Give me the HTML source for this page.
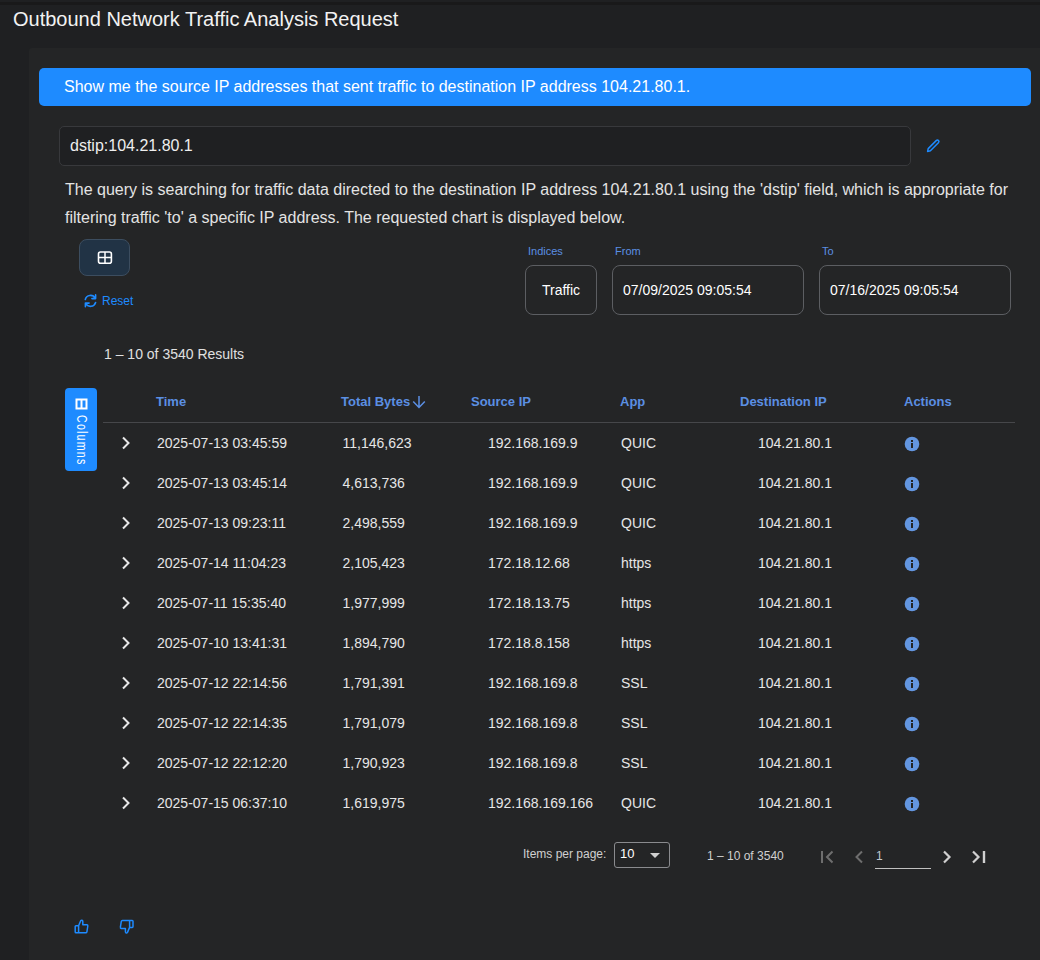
<!DOCTYPE html>
<html><head><meta charset="utf-8">
<style>
*{box-sizing:border-box;margin:0;padding:0}
html,body{width:1040px;height:960px;overflow:hidden;background:#1f2022;font-family:"Liberation Sans",sans-serif;color:#e6e6e6}
.a{position:absolute;white-space:nowrap}
#top{position:absolute;left:0;top:2px;width:1040px;height:3px;background:#19191a}
#title{left:13px;top:5px;font-size:20px;line-height:28px;color:#f2f2f2}
#panel{position:absolute;left:29px;top:48px;width:1020px;height:920px;background:#242526;border-radius:3px}
#banner{position:absolute;left:39px;top:68px;width:992px;height:38px;background:#1e8bff;border-radius:5px}
#banner span{left:25px;top:9px;font-size:16px;line-height:20px;color:#fff}
#qbox{position:absolute;left:59px;top:126px;width:852px;height:40px;background:#1f2022;border:1px solid #38393c;border-radius:5px}
#qbox span{left:10px;top:9px;font-size:16px;line-height:20px;color:#eee}
.para{left:65px;font-size:16px;line-height:28px;color:#e3e3e3}
#gbtn{position:absolute;left:79px;top:239px;width:51px;height:37px;background:#213345;border:1px solid #3c4d5f;border-radius:8px}
.lbl{font-size:11px;line-height:14px;color:#5b8fe3}
.box{position:absolute;top:265px;height:50px;border:1px solid #5c5e62;border-radius:8px}
.box span{font-size:14px;line-height:20px;top:14px;color:#fff}
#results{left:104px;top:344px;font-size:14px;line-height:20px;color:#e0e0e0}
#coltab{position:absolute;left:65px;top:388px;width:32px;height:83px;background:#1e8bff;border-radius:4px}
.th{top:394px;font-size:13px;font-weight:700;line-height:16px;color:#5b8fe3}
#hline{position:absolute;left:103px;top:422px;width:912px;height:1px;background:#46474a}
.td{font-size:14px;line-height:20px;color:#e6e6e6}
.pg{font-size:12px;line-height:16px;color:#d0d0d0}
.row{position:absolute;left:0;width:1040px;height:20px}
.row .td{top:0}
.chev{position:absolute;left:121px;top:3px}
.info{position:absolute;left:904px;top:3px}
</style></head><body>
<div id="top"></div>
<div class="a" id="title">Outbound Network Traffic Analysis Request</div>
<div id="panel"></div>
<div id="banner"><span class="a">Show me the source IP addresses that sent traffic to destination IP address 104.21.80.1.</span></div>
<div id="qbox"><span class="a">dstip:104.21.80.1</span></div>
<svg class="a" style="left:926px;top:138px" width="15" height="15" viewBox="0 0 15 15"><path d="M2.2 10.6 L10.2 2.6 Q11.4 1.5 12.5 2.6 Q13.5 3.7 12.4 4.8 L4.4 12.8 L1.6 13.4 Z" fill="none" stroke="#1e8bff" stroke-width="1.5" stroke-linejoin="round"/></svg>
<div class="a para" style="top:176px">The query is searching for traffic data directed to the destination IP address 104.21.80.1 using the 'dstip' field, which is appropriate for</div>
<div class="a para" style="top:204px">filtering traffic 'to' a specific IP address. The requested chart is displayed below.</div>
<div id="gbtn"></div>
<svg class="a" style="left:94px;top:248px" width="22" height="20" viewBox="0 0 22 20"><rect x="4.5" y="4" width="12.9" height="11.3" rx="2" fill="none" stroke="#fff" stroke-width="1.6"/><path d="M11 4V15.3M4.5 9.6H17.4" stroke="#fff" stroke-width="1.5"/></svg>
<svg class="a" style="left:82px;top:292px" width="18" height="18" viewBox="0 0 18 18"><path d="M3.3 7.5A5.3 5.3 0 0 1 13.2 6.3M13.6 2.9V6.6H9.9" fill="none" stroke="#1e8bff" stroke-width="1.6" stroke-linejoin="round" stroke-linecap="round"/><path d="M13.6 10.5A5.3 5.3 0 0 1 3.8 11.5M3.4 14.8V11.1H7.1" fill="none" stroke="#1e8bff" stroke-width="1.6" stroke-linejoin="round" stroke-linecap="round"/></svg>
<div class="a" style="left:102px;top:293px;font-size:12px;line-height:16px;color:#1e8bff">Reset</div>
<div class="a lbl" style="left:528px;top:244px">Indices</div>
<div class="a lbl" style="left:615px;top:244px">From</div>
<div class="a lbl" style="left:822px;top:244px">To</div>
<div class="box" style="left:525px;width:72px"><span class="a" style="left:16px">Traffic</span></div>
<div class="box" style="left:612px;width:192px"><span class="a" style="left:10px">07/09/2025 09:05:54</span></div>
<div class="box" style="left:819px;width:192px"><span class="a" style="left:10px">07/16/2025 09:05:54</span></div>
<div class="a" id="results">1 – 10 of 3540 Results</div>
<div id="coltab"></div>
<div class="a th" style="left:156px">Time</div>
<div class="a th" style="left:341px">Total Bytes</div>
<div class="a th" style="left:471px">Source IP</div>
<div class="a th" style="left:620px">App</div>
<div class="a th" style="left:740px">Destination IP</div>
<div class="a th" style="left:904px">Actions</div>
<div id="hline"></div>
<svg class="a" style="left:412px;top:395px" width="14" height="14" viewBox="0 0 14 14"><path d="M7 1V12.5M1.2 6.5L7 12.5L12.8 6.5" fill="none" stroke="#5b8fe3" stroke-width="1.5"/></svg>
<div class="a" style="left:65px;top:388px;width:32px;height:83px">
<svg class="a" style="left:10px;top:10px" width="13" height="13" viewBox="0 0 13 13"><path d="M0.5 0.5H12.5V11.5H0.5Z M2.5 2.5V9.5H5.5V2.5Z M7.5 2.5V9.5H10.5V2.5Z" fill="#fff" fill-rule="evenodd"/></svg>
<div class="a" style="left:9px;top:27px;font-size:14px;line-height:16px;letter-spacing:1.6px;color:#fff;transform-origin:0 0;transform:translate(16px,0) rotate(90deg) scaleX(0.76)">Columns</div>
</div>
<div class="a pg" style="left:523px;top:846px">Items per page:</div>
<div class="a" style="left:614px;top:842px;width:56px;height:26px;border:1px solid #8a8b8e;border-radius:3px"></div>
<div class="a" style="left:620px;top:846px;font-size:13px;line-height:16px;color:#fff">10</div>
<svg class="a" style="left:650px;top:853px" width="10" height="6" viewBox="0 0 10 6"><path d="M0 0H10L5 5Z" fill="#d0d0d0"/></svg>
<div class="a pg" style="left:707px;top:848px">1 – 10 of 3540</div>
<svg class="a" style="left:819px;top:849px" width="16" height="16" viewBox="0 0 16 16"><path d="M3 2V14" stroke="#6e6e6e" stroke-width="2"/><path d="M13.5 2.5L8 8L13.5 13.5" fill="none" stroke="#6e6e6e" stroke-width="2"/></svg>
<svg class="a" style="left:852px;top:849px" width="14" height="16" viewBox="0 0 14 16"><path d="M10 2.5L4.5 8L10 13.5" fill="none" stroke="#6e6e6e" stroke-width="2"/></svg>
<div class="a pg" style="left:876px;top:848px;color:#c0c8d0">1</div>
<div class="a" style="left:875px;top:868px;width:56px;height:1px;background:#c0c0c0"></div>
<svg class="a" style="left:940px;top:849px" width="14" height="16" viewBox="0 0 14 16"><path d="M4 2.5L9.5 8L4 13.5" fill="none" stroke="#d0d0d0" stroke-width="2.2"/></svg>
<svg class="a" style="left:970px;top:849px" width="18" height="16" viewBox="0 0 18 16"><path d="M3 2.5L8.5 8L3 13.5" fill="none" stroke="#d0d0d0" stroke-width="2.2"/><path d="M14 2V14" stroke="#d0d0d0" stroke-width="2.4"/></svg>
<svg class="a" style="left:70px;top:915px" width="24" height="23" viewBox="0 0 24 23"><path d="M5.2 11.6Q5.2 10.8 6 10.8H8.6V17.8H6Q5.2 17.8 5.2 17Z M8.6 10.8L10.7 5.8Q11.4 4.8 12.3 5.4Q12.8 5.9 12.8 6.8V9.7H17Q18 9.9 17.8 11L16.9 16.8Q16.7 17.8 15.8 17.8H8.6" fill="none" stroke="#1e8bff" stroke-width="1.5" stroke-linejoin="round"/></svg>
<svg class="a" style="left:114px;top:915px" width="24" height="23" viewBox="0 0 24 23"><path transform="rotate(180 12.1 11.6)" d="M5.2 11.6Q5.2 10.8 6 10.8H8.6V17.8H6Q5.2 17.8 5.2 17Z M8.6 10.8L10.7 5.8Q11.4 4.8 12.3 5.4Q12.8 5.9 12.8 6.8V9.7H17Q18 9.9 17.8 11L16.9 16.8Q16.7 17.8 15.8 17.8H8.6" fill="none" stroke="#1e8bff" stroke-width="1.5" stroke-linejoin="round"/></svg>
<div id="rows">
<div class="row" style="top:433px"><svg class="chev" width="10" height="14" viewBox="0 0 10 14"><path d="M2 1.5L7.5 7L2 12.5" fill="none" stroke="#e8e8e8" stroke-width="2"/></svg><span class="a td" style="left:157px">2025-07-13 03:45:59</span><span class="a td" style="left:342.5px">11,146,623</span><span class="a td" style="left:488px">192.168.169.9</span><span class="a td" style="left:621px">QUIC</span><span class="a td" style="left:758px">104.21.80.1</span><svg class="info" width="16" height="16" viewBox="0 0 16 16"><circle cx="8" cy="8" r="7.3" fill="#6396e0"/><rect x="7" y="4" width="2" height="2" fill="#242526"/><rect x="7" y="7" width="2" height="5" fill="#242526"/></svg></div>
<div class="row" style="top:473px"><svg class="chev" width="10" height="14" viewBox="0 0 10 14"><path d="M2 1.5L7.5 7L2 12.5" fill="none" stroke="#e8e8e8" stroke-width="2"/></svg><span class="a td" style="left:157px">2025-07-13 03:45:14</span><span class="a td" style="left:342.5px">4,613,736</span><span class="a td" style="left:488px">192.168.169.9</span><span class="a td" style="left:621px">QUIC</span><span class="a td" style="left:758px">104.21.80.1</span><svg class="info" width="16" height="16" viewBox="0 0 16 16"><circle cx="8" cy="8" r="7.3" fill="#6396e0"/><rect x="7" y="4" width="2" height="2" fill="#242526"/><rect x="7" y="7" width="2" height="5" fill="#242526"/></svg></div>
<div class="row" style="top:513px"><svg class="chev" width="10" height="14" viewBox="0 0 10 14"><path d="M2 1.5L7.5 7L2 12.5" fill="none" stroke="#e8e8e8" stroke-width="2"/></svg><span class="a td" style="left:157px">2025-07-13 09:23:11</span><span class="a td" style="left:342.5px">2,498,559</span><span class="a td" style="left:488px">192.168.169.9</span><span class="a td" style="left:621px">QUIC</span><span class="a td" style="left:758px">104.21.80.1</span><svg class="info" width="16" height="16" viewBox="0 0 16 16"><circle cx="8" cy="8" r="7.3" fill="#6396e0"/><rect x="7" y="4" width="2" height="2" fill="#242526"/><rect x="7" y="7" width="2" height="5" fill="#242526"/></svg></div>
<div class="row" style="top:553px"><svg class="chev" width="10" height="14" viewBox="0 0 10 14"><path d="M2 1.5L7.5 7L2 12.5" fill="none" stroke="#e8e8e8" stroke-width="2"/></svg><span class="a td" style="left:157px">2025-07-14 11:04:23</span><span class="a td" style="left:342.5px">2,105,423</span><span class="a td" style="left:488px">172.18.12.68</span><span class="a td" style="left:621px">https</span><span class="a td" style="left:758px">104.21.80.1</span><svg class="info" width="16" height="16" viewBox="0 0 16 16"><circle cx="8" cy="8" r="7.3" fill="#6396e0"/><rect x="7" y="4" width="2" height="2" fill="#242526"/><rect x="7" y="7" width="2" height="5" fill="#242526"/></svg></div>
<div class="row" style="top:593px"><svg class="chev" width="10" height="14" viewBox="0 0 10 14"><path d="M2 1.5L7.5 7L2 12.5" fill="none" stroke="#e8e8e8" stroke-width="2"/></svg><span class="a td" style="left:157px">2025-07-11 15:35:40</span><span class="a td" style="left:342.5px">1,977,999</span><span class="a td" style="left:488px">172.18.13.75</span><span class="a td" style="left:621px">https</span><span class="a td" style="left:758px">104.21.80.1</span><svg class="info" width="16" height="16" viewBox="0 0 16 16"><circle cx="8" cy="8" r="7.3" fill="#6396e0"/><rect x="7" y="4" width="2" height="2" fill="#242526"/><rect x="7" y="7" width="2" height="5" fill="#242526"/></svg></div>
<div class="row" style="top:633px"><svg class="chev" width="10" height="14" viewBox="0 0 10 14"><path d="M2 1.5L7.5 7L2 12.5" fill="none" stroke="#e8e8e8" stroke-width="2"/></svg><span class="a td" style="left:157px">2025-07-10 13:41:31</span><span class="a td" style="left:342.5px">1,894,790</span><span class="a td" style="left:488px">172.18.8.158</span><span class="a td" style="left:621px">https</span><span class="a td" style="left:758px">104.21.80.1</span><svg class="info" width="16" height="16" viewBox="0 0 16 16"><circle cx="8" cy="8" r="7.3" fill="#6396e0"/><rect x="7" y="4" width="2" height="2" fill="#242526"/><rect x="7" y="7" width="2" height="5" fill="#242526"/></svg></div>
<div class="row" style="top:673px"><svg class="chev" width="10" height="14" viewBox="0 0 10 14"><path d="M2 1.5L7.5 7L2 12.5" fill="none" stroke="#e8e8e8" stroke-width="2"/></svg><span class="a td" style="left:157px">2025-07-12 22:14:56</span><span class="a td" style="left:342.5px">1,791,391</span><span class="a td" style="left:488px">192.168.169.8</span><span class="a td" style="left:621px">SSL</span><span class="a td" style="left:758px">104.21.80.1</span><svg class="info" width="16" height="16" viewBox="0 0 16 16"><circle cx="8" cy="8" r="7.3" fill="#6396e0"/><rect x="7" y="4" width="2" height="2" fill="#242526"/><rect x="7" y="7" width="2" height="5" fill="#242526"/></svg></div>
<div class="row" style="top:713px"><svg class="chev" width="10" height="14" viewBox="0 0 10 14"><path d="M2 1.5L7.5 7L2 12.5" fill="none" stroke="#e8e8e8" stroke-width="2"/></svg><span class="a td" style="left:157px">2025-07-12 22:14:35</span><span class="a td" style="left:342.5px">1,791,079</span><span class="a td" style="left:488px">192.168.169.8</span><span class="a td" style="left:621px">SSL</span><span class="a td" style="left:758px">104.21.80.1</span><svg class="info" width="16" height="16" viewBox="0 0 16 16"><circle cx="8" cy="8" r="7.3" fill="#6396e0"/><rect x="7" y="4" width="2" height="2" fill="#242526"/><rect x="7" y="7" width="2" height="5" fill="#242526"/></svg></div>
<div class="row" style="top:753px"><svg class="chev" width="10" height="14" viewBox="0 0 10 14"><path d="M2 1.5L7.5 7L2 12.5" fill="none" stroke="#e8e8e8" stroke-width="2"/></svg><span class="a td" style="left:157px">2025-07-12 22:12:20</span><span class="a td" style="left:342.5px">1,790,923</span><span class="a td" style="left:488px">192.168.169.8</span><span class="a td" style="left:621px">SSL</span><span class="a td" style="left:758px">104.21.80.1</span><svg class="info" width="16" height="16" viewBox="0 0 16 16"><circle cx="8" cy="8" r="7.3" fill="#6396e0"/><rect x="7" y="4" width="2" height="2" fill="#242526"/><rect x="7" y="7" width="2" height="5" fill="#242526"/></svg></div>
<div class="row" style="top:793px"><svg class="chev" width="10" height="14" viewBox="0 0 10 14"><path d="M2 1.5L7.5 7L2 12.5" fill="none" stroke="#e8e8e8" stroke-width="2"/></svg><span class="a td" style="left:157px">2025-07-15 06:37:10</span><span class="a td" style="left:342.5px">1,619,975</span><span class="a td" style="left:488px">192.168.169.166</span><span class="a td" style="left:621px">QUIC</span><span class="a td" style="left:758px">104.21.80.1</span><svg class="info" width="16" height="16" viewBox="0 0 16 16"><circle cx="8" cy="8" r="7.3" fill="#6396e0"/><rect x="7" y="4" width="2" height="2" fill="#242526"/><rect x="7" y="7" width="2" height="5" fill="#242526"/></svg></div>
</div>
</body></html>
